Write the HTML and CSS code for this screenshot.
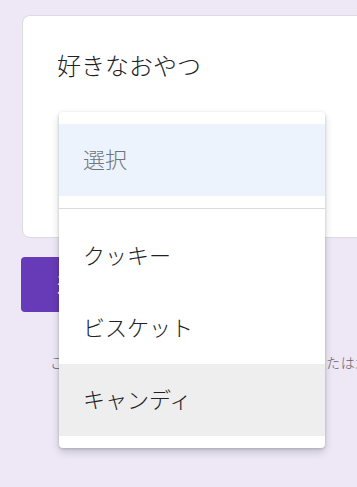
FILE: index.html
```html
<!DOCTYPE html>
<html lang="ja">
<head>
<meta charset="utf-8">
<link rel="stylesheet" href="styles.css">
</head>
<body>
<div class="page">
  <div class="card">
    <div class="title">好きなおやつ</div>
    <div class="field"></div>
  </div>
  <button class="submit">送信</button>
  <div class="footer">このコンテンツは Google によって作成または承認されたものではありません。</div>
</div>
<div class="menu">
  <div class="item selected placeholder">選択</div>
  <div class="divider"></div>
  <div class="item">クッキー</div>
  <div class="item">ビスケット</div>
  <div class="item hover">キャンディ</div>
</div>
</body>
</html>
```
FILE: styles.css
```css
html, body {
  margin: 0;
  padding: 0;
  overflow: hidden;
  background: #ede7f6;
  font-family: "Noto Sans CJK JP", "Noto Sans", sans-serif;
  font-weight: 300;
}
.page {
  width: 640px;
  padding: 15px 0 0 21px;
  display: flex;
  flex-direction: column;
  align-items: flex-start;
}
.card {
  box-sizing: border-box;
  width: 600px;
  margin-left: 1px;
  background: #fff;
  border: 1px solid #dadce0;
  border-radius: 8px;
  padding: 31px 34px 33px 34px;
}
.title {
  font-size: 24px;
  line-height: 36px;
  color: #202124;
}
.field {
  height: 121px;
}
.submit {
  margin-top: 19px;
  height: 55px;
  width: 120px;
  border: none;
  border-radius: 4px;
  background: #673ab7;
  color: #fff;
  font-family: inherit;
  font-size: 20px;
  text-align: left;
  padding: 0 0 0 36px;
}
.footer {
  margin-top: 40px;
  padding-left: 29px;
  font-size: 14px;
  line-height: 20px;
  letter-spacing: 0.7px;
  color: #5f6368;
  white-space: nowrap;
}
.menu {
  position: absolute;
  left: 59px;
  top: 112px;
  width: 266px;
  padding: 12px 0;
  background: #fff;
  border-radius: 4px;
  box-shadow: 0 1px 3px rgba(0,0,0,0.18), 0 4px 8px rgba(0,0,0,0.16);
}
.item {
  box-sizing: border-box;
  height: 72px;
  display: flex;
  align-items: center;
  padding: 0 0 4px 24px;
  font-size: 22px;
  color: #202124;
}
.item.placeholder {
  color: #70757a;
}
.item.selected {
  background: #edf3fd;
}
.item.hover {
  background: #eeeeee;
}
.divider {
  height: 1px;
  background: #dadce0;
  margin: 12px 0 11px;
}
```
